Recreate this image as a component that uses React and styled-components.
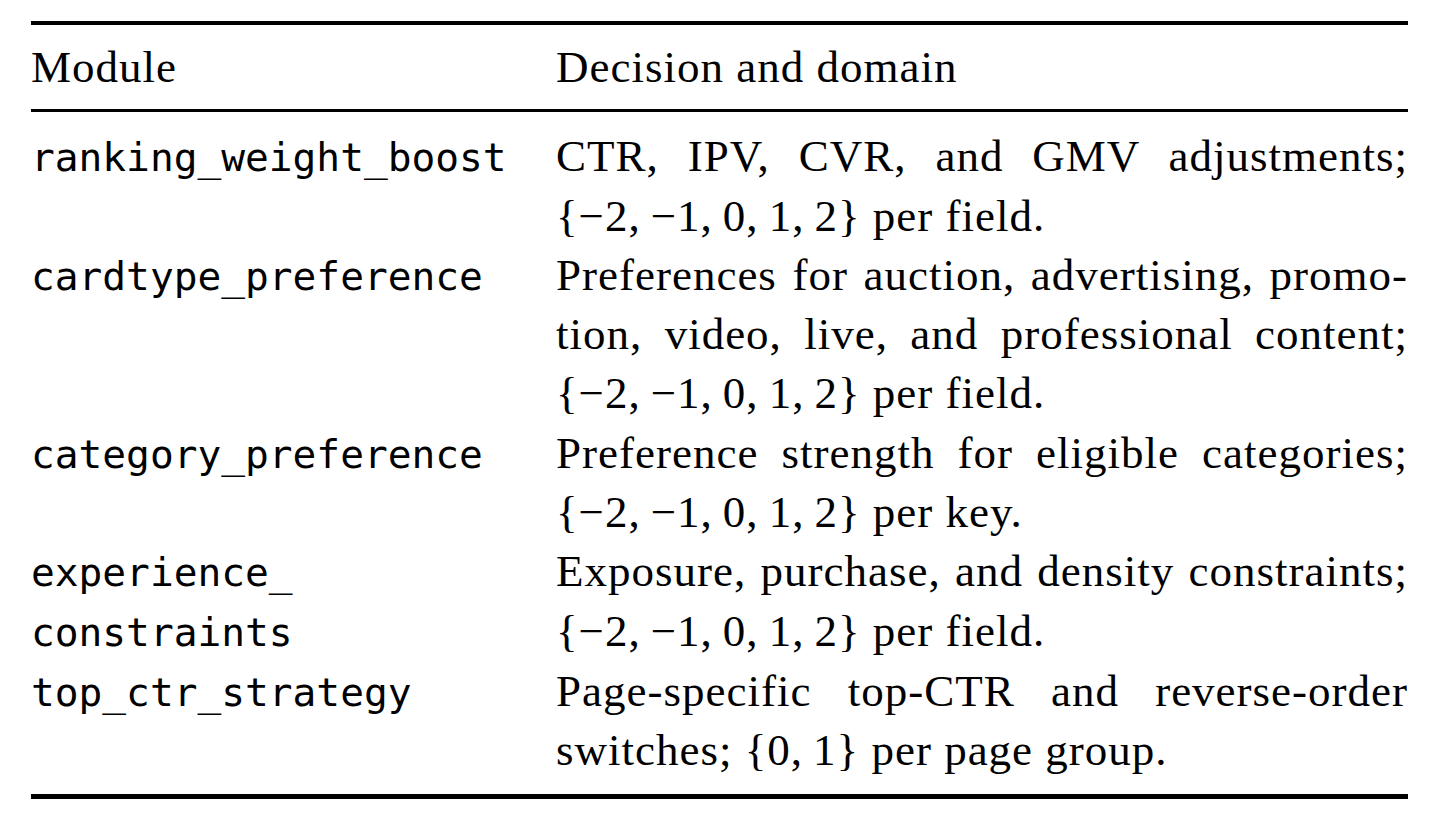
import styled, { createGlobalStyle } from "styled-components";

const GlobalStyle = createGlobalStyle`
    html, body {
        margin: 0;
        padding: 0;
        background: #ffffff;
    }
`;

const Page = styled.div`
    width: 1452px;
    height: 828px;
    padding-top: 21px;
    box-sizing: border-box;
    background: #ffffff;
`;

const Table = styled.div`
    margin-left: 31px;
    width: 1377px;
    color: #000000;
    font-family: "Liberation Serif", "Times New Roman", serif;
    font-size: 45px;
    letter-spacing: 1px;
`;

const Rule = styled.div`
    height: ${props => props.thick}px;
    background: #000000;
`;

const Body = styled.div`
    padding: ${props => props.pad};
`;

const Row = styled.div`
    display: grid;
    grid-template-columns: 525px 852px;
    align-items: baseline;
`;

const Cell = styled.div`
    display: flex;
    flex-direction: column;
`;

const Line = styled.div`
    line-height: 59.3px;
    height: 59.3px;
    white-space: nowrap;
    text-align: ${props => props.fill ? "justify" : "left"};
    text-align-last: ${props => props.fill ? "justify" : "left"};
`;

const Code = styled(Line)`
    font-family: "DejaVu Sans Mono", "Liberation Mono", monospace;
    font-size: 39.5px;
    letter-spacing: 0;
`;

const SET = "{\u2212" + "2,\u2009\u22121,\u20090,\u20091,\u20092}";

const rows = [
    {
        module: ["ranking_weight_boost"],
        text: [
            ["CTR, IPV, CVR, and GMV adjustments;", true],
            [SET + " per field.", false],
        ],
    },
    {
        module: ["cardtype_preference"],
        text: [
            ["Preferences for auction, advertising, promo-", true],
            ["tion, video, live, and professional content;", true],
            [SET + " per field.", false],
        ],
    },
    {
        module: ["category_preference"],
        text: [
            ["Preference strength for eligible categories;", true],
            [SET + " per key.", false],
        ],
    },
    {
        module: ["experience_", "constraints"],
        text: [
            ["Exposure, purchase, and density constraints;", true],
            [SET + " per field.", false],
        ],
    },
    {
        module: ["top_ctr_strategy"],
        text: [
            ["Page-specific top-CTR and reverse-order", true],
            ["switches; {0,\u20091} per page group.", false],
        ],
    },
];

function App() {
    return (
        <Page>
            <GlobalStyle />
            <Table>
                <Rule thick={4} />
                <Body pad="12.5px 0 12px">
                    <Row>
                        <Cell><Line>Module</Line></Cell>
                        <Cell><Line>Decision and domain</Line></Cell>
                    </Row>
                </Body>
                <Rule thick={3} />
                <Body pad="15.5px 0 13px">
                    {rows.map(row => (
                        <Row key={row.module[0]}>
                            <Cell>
                                {row.module.map(m => <Code key={m}>{m}</Code>)}
                            </Cell>
                            <Cell>
                                {row.text.map(([t, fill]) => (
                                    <Line key={t} fill={fill}>{t}</Line>
                                ))}
                            </Cell>
                        </Row>
                    ))}
                </Body>
                <Rule thick={5} />
            </Table>
        </Page>
    );
}

export default App;
